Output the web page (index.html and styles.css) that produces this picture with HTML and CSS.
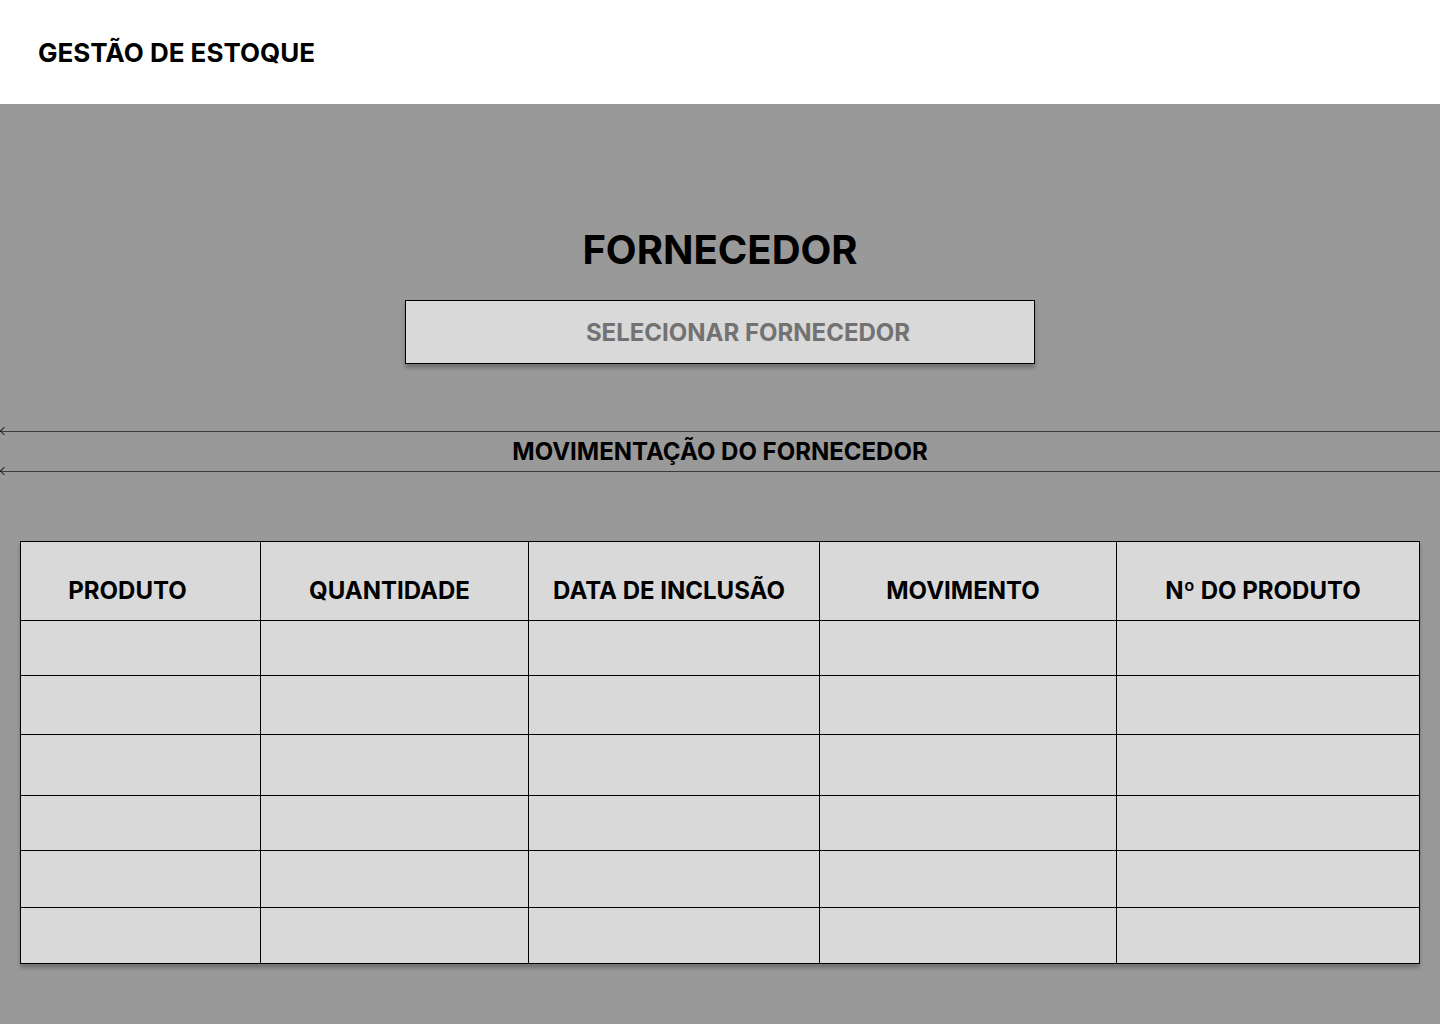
FILE: index.html
```html
<!DOCTYPE html>
<html lang="pt-BR">
  <head>
    <meta charset="UTF-8" />
    <meta name="viewport" content="width=device-width, initial-scale=1.0" />
    <title>Gestão de Estoque - Fornecedor</title>
    <link rel="stylesheet" href="styles.css">
  </head>
  <body>
    <header class="topbar">
      <h1>GESTÃO DE ESTOQUE</h1>
    </header>

    <main class="content">
      <h2 class="page-title">FORNECEDOR</h2>

      <button class="select-btn" type="button">SELECIONAR FORNECEDOR</button>

      <div class="section-title">
        <div class="rule"></div>
        <h3>MOVIMENTAÇÃO DO FORNECEDOR</h3>
        <div class="rule"></div>
      </div>

      <table class="moves">
        <colgroup>
          <col style="width: 240px" />
          <col style="width: 268px" />
          <col style="width: 291px" />
          <col style="width: 297px" />
          <col />
        </colgroup>
        <thead>
          <tr>
            <th class="shift-left">PRODUTO</th>
            <th>QUANTIDADE</th>
            <th>DATA DE INCLUSÃO</th>
            <th>MOVIMENTO</th>
            <th>Nº DO PRODUTO</th>
          </tr>
        </thead>
        <tbody>
          <tr class="r1"><td></td><td></td><td></td><td></td><td></td></tr>
          <tr class="r2"><td></td><td></td><td></td><td></td><td></td></tr>
          <tr class="r3"><td></td><td></td><td></td><td></td><td></td></tr>
          <tr class="r4"><td></td><td></td><td></td><td></td><td></td></tr>
          <tr class="r5"><td></td><td></td><td></td><td></td><td></td></tr>
          <tr class="r6"><td></td><td></td><td></td><td></td><td></td></tr>
        </tbody>
      </table>
    </main>
  </body>
</html>
```

FILE: styles.css
```css
* {
  box-sizing: border-box;
}

body {
  font-family: Inter, "Liberation Sans", Arial, sans-serif;
  background-color: #999999;
  margin: 0;
  padding: 0;
  color: #000;
}

.topbar {
  background-color: #fff;
  height: 104px;
  display: flex;
  align-items: center;
  padding-left: 38px;
}

.topbar h1 {
  margin: 2px 0 0;
  font-size: 26px;
  font-weight: 700;
  line-height: 1;
}

.content {
  min-height: calc(100vh - 104px);
  padding: 122px 20px 40px;
  display: flex;
  flex-direction: column;
  align-items: center;
}

.page-title {
  margin: 0;
  font-size: 40px;
  font-weight: 700;
  line-height: 48px;
}

.select-btn {
  margin-top: 26px;
  width: 630px;
  height: 64px;
  background-color: #d9d9d9;
  border: 1px solid #000;
  box-shadow: 0 4px 4px rgba(0, 0, 0, 0.25);
  font-family: inherit;
  font-size: 24px;
  font-weight: 700;
  color: #727272;
  padding: 0 0 0 56px;
  cursor: pointer;
}

.section-title {
  align-self: stretch;
  margin: 67px -20px 0;
}

.section-title h3 {
  margin: 0;
  text-align: center;
  font-size: 24px;
  font-weight: 700;
  line-height: 39px;
}

.rule {
  position: relative;
  height: 1px;
  background-color: #3a3a3a;
}

.rule::before {
  content: "";
  position: absolute;
  left: 1px;
  top: -3px;
  width: 5px;
  height: 5px;
  border-left: 1px solid #222;
  border-bottom: 1px solid #222;
  transform: rotate(45deg);
}

.moves {
  margin-top: 69px;
  align-self: stretch;
  width: 1400px;
  border-collapse: collapse;
  table-layout: fixed;
  background-color: #d9d9d9;
  box-shadow: 0 4px 4px rgba(0, 0, 0, 0.25);
}

.moves,
.moves th,
.moves td {
  border: 1px solid #000;
}

.moves th {
  height: 79px;
  padding: 18px 16px 0 6px;
  font-size: 24px;
  font-weight: 700;
  text-align: center;
  white-space: nowrap;
}

.moves th.shift-left {
  padding-right: 32px;
}

.moves td {
  padding: 0;
}

.moves .r1 td { height: 55px; }
.moves .r2 td { height: 59px; }
.moves .r3 td { height: 61px; }
.moves .r4 td { height: 55px; }
.moves .r5 td { height: 57px; }
.moves .r6 td { height: 56px; }
```
